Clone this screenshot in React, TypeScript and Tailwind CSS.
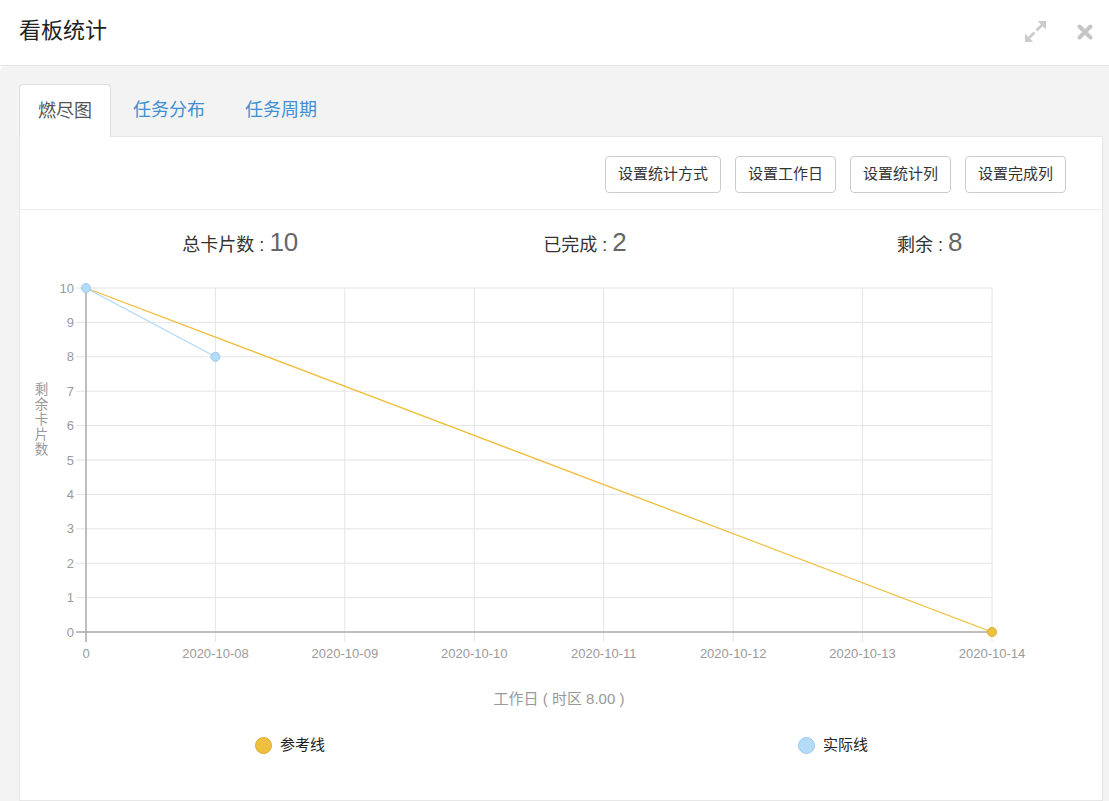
import React from 'react';

const FONT = '"Liberation Sans", "Noto Sans CJK SC", sans-serif';

const X = (i: number) => 66 + i * 129.43;
const Y = (v: number) => 15 + (10 - v) * 34.4;

const dates = ['0', '2020-10-08', '2020-10-09', '2020-10-10', '2020-10-11', '2020-10-12', '2020-10-13', '2020-10-14'];

const ExpandIcon = () => (
  <svg width="21" height="21" viewBox="0 0 20 20" fill="#cccccc">
    <polygon points="20,0 20,8 12,0" />
    <line x1="16.5" y1="3.5" x2="11" y2="9" stroke="#cccccc" strokeWidth="2.6" />
    <polygon points="0,20 0,12 8,20" />
    <line x1="3.5" y1="16.5" x2="9" y2="11" stroke="#cccccc" strokeWidth="2.6" />
  </svg>
);

const CloseIcon = () => (
  <svg width="16" height="16" viewBox="0 0 16 16">
    <path d="M2.5 2.5 L13.5 13.5 M13.5 2.5 L2.5 13.5" stroke="#c6c6c6" strokeWidth="4" strokeLinecap="round" />
  </svg>
);

const Chart: React.FC = () => (
  <svg width="1082" height="440" className="block">
    {/* grid */}
    {Array.from({ length: 10 }, (_, k) => k + 1).map((v) => (
      <line key={'h' + v} x1="56" x2="972" y1={Y(v)} y2={Y(v)} stroke="#e4e4e4" strokeWidth="1" />
    ))}
    {[1, 2, 3, 4, 5, 6, 7].map((i) => (
      <line key={'v' + i} x1={X(i)} x2={X(i)} y1={Y(10)} y2={Y(0) + 10} stroke="#e4e4e4" strokeWidth="1" />
    ))}
    {/* axes */}
    <line x1="56" x2="972" y1={Y(0)} y2={Y(0)} stroke="#a8a8a8" strokeWidth="1.5" />
    <line x1={X(0)} x2={X(0)} y1={Y(10)} y2={Y(0) + 10} stroke="#a8a8a8" strokeWidth="1.5" />

    {/* y labels */}
    {Array.from({ length: 11 }, (_, v) => v).map((v) => (
      <text key={'yl' + v} x="54" y={Y(v) + 4.5} textAnchor="end" fontSize="13" fill="#9a9a9a" fontFamily={FONT}>
        {v}
      </text>
    ))}
    {/* x labels */}
    {dates.map((d, i) => (
      <text key={d} x={X(i)} y="385" textAnchor="middle" fontSize="13" fill="#9a9a9a" fontFamily={FONT}>
        {d}
      </text>
    ))}

    {/* y title */}
    {['剩', '余', '卡', '片', '数'].map((c, k) => (
      <text key={c} x="21.5" y={121 + k * 15} textAnchor="middle" fontSize="13.5" fill="#999999" fontFamily={FONT}>
        {c}
      </text>
    ))}
    {/* x title */}
    <text x="539" y="431" textAnchor="middle" fontSize="15" fill="#999999" fontFamily={FONT}>
      工作日 ( 时区 8.00 )
    </text>

    {/* reference line */}
    <line x1={X(0)} y1={Y(10)} x2={X(7)} y2={Y(0)} stroke="#efbd38" strokeWidth="1.3" />
    {/* actual line */}
    <line x1={X(0)} y1={Y(10)} x2={X(1)} y2={Y(8)} stroke="#b2d8f6" strokeWidth="1.3" />

    <circle cx={X(7)} cy={Y(0)} r="4.5" fill="#efc040" stroke="#dcab2c" strokeWidth="1" />
    <circle cx={X(0)} cy={Y(10)} r="4.5" fill="#b4dbf8" stroke="#9cc9ee" strokeWidth="1" />
    <circle cx={X(1)} cy={Y(8)} r="4.5" fill="#b4dbf8" stroke="#9cc9ee" strokeWidth="1" />
  </svg>
);

const Stat: React.FC<{ label: string; value: number }> = ({ label, value }) => (
  <div className="flex items-baseline justify-center">
    <span className="text-[18px] text-[#333] whitespace-pre">{label} : </span>
    <span className="text-[26px] text-[#666] leading-none">{value}</span>
  </div>
);

const App: React.FC = () => {
  const buttons = ['设置统计方式', '设置工作日', '设置统计列', '设置完成列'];

  return (
    <div className="w-[1109px] h-[801px] overflow-hidden bg-white flex flex-col" style={{ fontFamily: FONT }}>
      {/* header */}
      <div className="h-[66px] shrink-0 border-b border-[#e5e5e5] flex items-center justify-between pl-[19px] pr-[16px] pb-[5px]">
        <h1 className="text-[22px] text-[#222] font-normal">看板统计</h1>
        <div className="flex items-center gap-[31px] pt-[3px]">
          <ExpandIcon />
          <CloseIcon />
        </div>
      </div>

      {/* body */}
      <div className="flex-1 min-h-0 bg-[#f3f3f3] rounded-tl-[6px] pl-[19px] pr-[6px] pt-[18px] flex flex-col">
        {/* tabs */}
        <div className="h-[52px] shrink-0 flex items-start gap-[4px] text-[18px]">
          <div className="h-[53px] px-[18px] flex items-center bg-white border border-b-0 border-[#dddddd] rounded-t-[4px] text-[#555] relative z-10">
            燃尽图
          </div>
          <div className="h-[52px] px-[18px] flex items-center text-[#3d8fd6]">任务分布</div>
          <div className="h-[52px] px-[18px] flex items-center text-[#3d8fd6]">任务周期</div>
        </div>

        {/* panel */}
        <div className="flex-1 min-h-0 bg-white border border-[#e6e6e6] flex flex-col">
          <div className="flex justify-end gap-[14px] pt-[19px] pb-[16px] pr-[36px] border-b border-[#eeeeee]">
            {buttons.map((b) => (
              <button
                key={b}
                className="h-[37px] px-3 border border-[#cccccc] rounded-[4px] bg-white text-[15px] text-[#333]"
              >
                {b}
              </button>
            ))}
          </div>

          <div className="h-[63px] pt-[5px] ml-[48px] grid grid-cols-3 items-center">
            <Stat label="总卡片数" value={10} />
            <Stat label="已完成" value={2} />
            <Stat label="剩余" value={8} />
          </div>

          <Chart />

          <div className="h-[64px] flex items-center pl-[235px] gap-[473px] text-[15px] text-[#222]">
            <div className="flex items-center gap-[8px]">
              <span className="w-[17px] h-[17px] rounded-full bg-[#efc040] border-[1.5px] border-[#dcab2c]" />
              <span>参考线</span>
            </div>
            <div className="flex items-center gap-[8px]">
              <span className="w-[17px] h-[17px] rounded-full bg-[#b4dbf8] border-[1.5px] border-[#9cc9ee]" />
              <span>实际线</span>
            </div>
          </div>
        </div>
      </div>
    </div>
  );
};

export default App;
